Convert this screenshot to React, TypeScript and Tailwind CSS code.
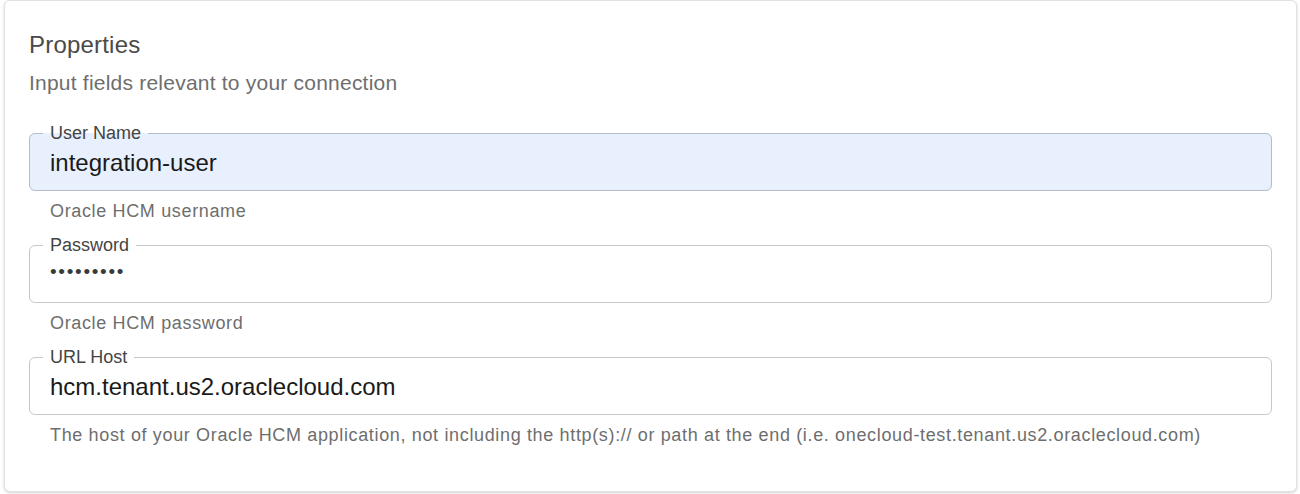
import React from 'react';

type Field = {
  label: string;
  value: string;
  helper: string;
  autofill?: boolean;
  secret?: boolean;
};

const fields: Field[] = [
  { label: 'User Name', value: 'integration-user', helper: 'Oracle HCM username', autofill: true },
  { label: 'Password', value: '•••••••••', helper: 'Oracle HCM password', secret: true },
  {
    label: 'URL Host',
    value: 'hcm.tenant.us2.oraclecloud.com',
    helper:
      'The host of your Oracle HCM application, not including the http(s):// or path at the end (i.e. onecloud-test.tenant.us2.oraclecloud.com)',
  },
];

const FieldBox: React.FC<{ field: Field }> = ({ field }) => (
  <div className="flex flex-col">
    <fieldset
      className={
        'h-[67px] rounded-[6px] border px-[13px] ' +
        (field.autofill ? 'border-[#b3bcc9] bg-[#e8f0fe]' : 'border-[#c8c8c8] bg-white')
      }
    >
      <legend className="px-[7px] text-[18px] leading-[18px] text-[#444444]">{field.label}</legend>
      {field.secret ? (
        <div className="mt-[3px] h-[36px] px-[7px] text-[19px] leading-[36px] tracking-[1.7px] text-[#3a3a3a] -translate-y-[3px]">
          {field.value}
        </div>
      ) : (
        <div className="mt-[3px] h-[36px] px-[7px] text-[24px] leading-[36px] text-[#1a1a1a]">{field.value}</div>
      )}
    </fieldset>
    <p className="mt-[5px] ml-[21px] text-[18px] leading-[30px] tracking-[0.65px] text-[#6e6e6e]">
      {field.helper}
    </p>
  </div>
);

export default function App() {
  return (
    <div className="w-[1300px] h-[494px] bg-white font-['Liberation_Sans',Arial,sans-serif]">
      <div className="ml-[4px] w-[1293px] h-[492px] rounded-[6px] border border-[#e2e2e2] bg-white shadow-[0_1px_3px_rgba(0,0,0,0.18)] px-[24px] pt-[26px]">
        <h2 className="text-[24px] leading-[36px] tracking-[0.2px] text-[#4a4a4a]">Properties</h2>
        <p className="mt-[5px] text-[21px] leading-[30px] tracking-[0.22px] text-[#6e6e6e]">
          Input fields relevant to your connection
        </p>
        <div className="mt-[26px] flex flex-col gap-[10px]">
          {fields.map(f => (
            <FieldBox key={f.label} field={f} />
          ))}
        </div>
      </div>
    </div>
  );
}
